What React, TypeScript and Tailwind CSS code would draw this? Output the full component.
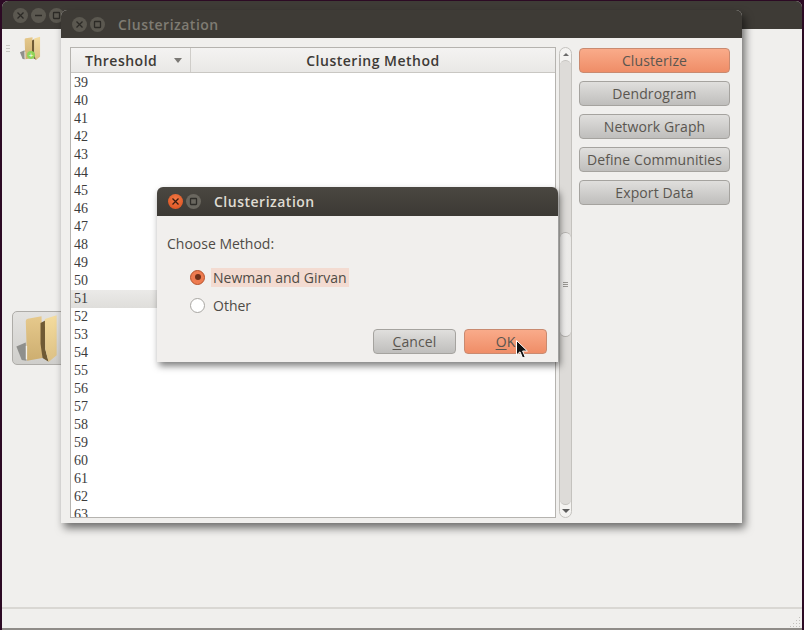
import React from 'react';

const uiFont = "font-['Open_Sans','Noto_Sans',sans-serif]";

const rows = Array.from({ length: 25 }, (_, i) => 39 + i);

const FolderIcon: React.FC<{ className?: string }> = ({ className }) => (
  <svg viewBox="40 95 140 155" className={className}>
    <defs>
      <linearGradient id="folderBody" x1="0" y1="0" x2="0" y2="1">
        <stop offset="0" stopColor="#e6c98c" />
        <stop offset="1" stopColor="#cdae70" />
      </linearGradient>
      <linearGradient id="folderFlap" x1="0" y1="0" x2="0" y2="1">
        <stop offset="0" stopColor="#f4dc9e" />
        <stop offset="1" stopColor="#dcc084" />
      </linearGradient>
    </defs>
    <path d="M50 198 L78 186 L80 240 L66 238 Z" fill="#8f8f8c" />
    <path d="M78 122 Q78 116 84 115 L125 108 L128 232 L82 240 Z" fill="url(#folderBody)" />
    <path d="M78 196 h4 v40 h-4 Z" fill="#f3efe6" />
    <path d="M122 128 L136 120 L136 205 L146 243 L128 232 L122 190 Z" fill="#6f5a34" />
    <path d="M135 116 L170 105 L170 224 L146 244 L136 205 Z" fill="url(#folderFlap)" />
  </svg>
);

const WinButton: React.FC<{ kind: 'close' | 'min' | 'max'; active?: boolean }> = ({ kind, active }) => {
  const isRed = active && kind === 'close';
  const face = isRed
    ? 'bg-[radial-gradient(circle_at_50%_35%,#f47a45,#d84d1c)]'
    : active
      ? 'bg-[#6a675f]'
      : 'bg-[#5b5850]';
  const ink = isRed ? '#3a1c10' : active ? '#2f2d29' : '#2c2a26';
  return (
    <span className={`flex h-[15px] w-[15px] items-center justify-center rounded-full ${face}`}>
      <svg viewBox="0 0 9 9" className="h-[9px] w-[9px]" fill="none" stroke={ink} strokeWidth="1.3">
        {kind === 'close' && <path d="M1.5 1.5 L7.5 7.5 M7.5 1.5 L1.5 7.5" />}
        {kind === 'min' && <path d="M1 4.5 H8" strokeWidth="1.6" />}
        {kind === 'max' && <rect x="1.5" y="1.5" width="6" height="6" rx="0.5" />}
      </svg>
    </span>
  );
};

const GtkButton: React.FC<{ orange?: boolean; className?: string; children: React.ReactNode }> = ({
  orange,
  className = '',
  children,
}) => (
  <div
    className={`flex h-[25px] items-center justify-center rounded-[4px] border text-[14px] tracking-[0.1px] text-[#5a5650] ${
      orange
        ? 'border-[#c98a70] bg-gradient-to-b from-[#f9ab8a] to-[#ef8d67]'
        : 'border-[#a5a39f] bg-gradient-to-b from-[#e0dfdd] to-[#bfbebc]'
    } ${className}`}
  >
    {children}
  </div>
);

const ScrollBar = () => (
  <div className="flex h-[471px] w-[13px] flex-col overflow-hidden rounded-[7px] border border-[#c4c2be] bg-[#f4f3f1]">
    <div className="flex h-[12px] items-center justify-center">
      <span className="h-0 w-0 border-x-[3px] border-b-[3px] border-x-transparent border-b-[#6a6a6a]" />
    </div>
    <div className="flex-1 rounded-[7px] border-y border-[#c4c2be] bg-[#dddbd8]">
      <div className="mt-[171px] flex h-[105px] flex-col items-center justify-center gap-[1px] rounded-[7px] border-y border-[#b5b3af] bg-gradient-to-r from-[#f6f5f4] to-[#e9e8e6]">
        <span className="h-px w-[5px] bg-[#9a9894]" />
        <span className="h-px w-[5px] bg-[#9a9894]" />
        <span className="h-px w-[5px] bg-[#9a9894]" />
      </div>
    </div>
    <div className="flex h-[12px] items-center justify-center">
      <span className="h-0 w-0 border-x-[4px] border-t-[4px] border-x-transparent border-t-[#5c5c5c]" />
    </div>
  </div>
);

const Cursor = () => (
  <svg viewBox="0 0 13 20" className="absolute left-[516px] top-[340px] h-[20px] w-[13px]">
    <path
      d="M0.5 0.5 L0.5 15 L4 11.8 L6.6 18 L9.2 16.9 L6.6 11 L11.4 11 Z"
      fill="#111"
      stroke="#fff"
      strokeWidth="1"
      strokeLinejoin="round"
    />
  </svg>
);

export default function App() {
  return (
    <div className={`relative h-[630px] w-[804px] overflow-hidden bg-[#2c0a24] ${uiFont}`}>
      {/* back window */}
      <div className="absolute left-[2px] top-[1px] flex h-[627px] w-[800px] flex-col overflow-hidden rounded-t-[6px] bg-[#f0efed]">
        <div className="flex h-[28px] items-center gap-[3px] bg-[#3e3b36] pl-[11px]">
          <WinButton kind="close" />
          <WinButton kind="min" />
          <WinButton kind="max" />
        </div>
        <div className="flex h-[50px] items-start pl-[4px] pt-[6px]">
          <div className="mt-[10px] flex w-[4px] flex-col gap-[2px]">
            <span className="h-px bg-[#c9c7c3]" />
            <span className="h-px bg-[#c9c7c3]" />
            <span className="h-px bg-[#c9c7c3]" />
          </div>
          <div className="relative ml-[8px]">
            <FolderIcon className="h-[26px] w-[24px]" />
            <span className="absolute bottom-[2px] left-[9px] flex h-[8px] w-[8px] items-center justify-center rounded-full bg-[#8fd45a] text-[8px] leading-none text-white">
              +
            </span>
          </div>
        </div>
        <div className="flex flex-1 items-start pl-[10px] pt-[232px]">
          <div className="flex h-[54px] w-[60px] items-center justify-start rounded-[5px] border border-[#aeaca8] bg-gradient-to-b from-[#e4e3e1] to-[#cfcecb]">
            <FolderIcon className="h-[52px] w-[47px]" />
          </div>
        </div>
        <div className="flex h-[21px] shrink-0 items-end justify-end border-t-2 border-[#d9d7d3]">
          <svg viewBox="0 0 12 12" className="h-[12px] w-[12px]" fill="#c2c0bc">
            <rect x="9" y="1" width="1" height="1" />
            <rect x="6" y="4" width="1" height="1" />
            <rect x="9" y="4" width="1" height="1" />
            <rect x="3" y="7" width="1" height="1" />
            <rect x="6" y="7" width="1" height="1" />
            <rect x="9" y="7" width="1" height="1" />
            <rect x="0" y="10" width="1" height="1" />
            <rect x="3" y="10" width="1" height="1" />
            <rect x="6" y="10" width="1" height="1" />
            <rect x="9" y="10" width="1" height="1" />
          </svg>
        </div>
      </div>
      <div className="absolute bottom-0 left-[2px] h-[2px] w-[800px] bg-[#8f8c88]" />

      {/* clusterization window */}
      <div className="absolute left-[61px] top-[10px] flex h-[513px] w-[681px] flex-col rounded-t-[6px] bg-[#f0efed] shadow-[3px_5px_8px_rgba(0,0,0,0.55)]">
        <div className="flex h-[28px] items-center rounded-t-[6px] bg-[#3e3b36] pl-[11px]">
          <div className="flex gap-[3px]">
            <WinButton kind="close" />
            <WinButton kind="max" />
          </div>
          <span className="ml-[13px] text-[14px] font-semibold tracking-[0.5px] text-[#7f7c73]">Clusterization</span>
        </div>
        <div className="flex items-start pl-[9px] pt-[9px]">
          <div className="flex h-[471px] w-[486px] flex-col overflow-hidden border border-[#b5b3af] bg-white">
            <div className="flex h-[25px] shrink-0 border-b border-[#c9c7c3] bg-gradient-to-b from-[#f4f3f2] to-[#e9e8e6] text-[14px] font-semibold tracking-[0.5px] text-[#3d3a36]">
              <div className="flex w-[120px] items-center border-r border-[#cfcdc9] pl-[14px]">
                <span>Threshold</span>
                <span className="ml-auto mr-[8px] h-0 w-0 border-x-[4px] border-t-[5px] border-x-transparent border-t-[#7b7975]" />
              </div>
              <div className="flex flex-1 items-center justify-center">Clustering Method</div>
            </div>
            <div className="flex-1 overflow-hidden pt-px font-['Liberation_Serif',serif] text-[14px] leading-[17px] text-[#3c3c3c]">
              {rows.map((n) => (
                <div
                  key={n}
                  className={`h-[18px] pl-[3px] ${n === 51 ? 'bg-gradient-to-b from-[#ebeae8] to-[#dfdedb]' : ''}`}
                >
                  {n}
                </div>
              ))}
            </div>
          </div>
          <div className="ml-[3px]">
            <ScrollBar />
          </div>
          <div className="ml-[7px] mt-px flex w-[151px] flex-col gap-[8px]">
            <GtkButton orange>Clusterize</GtkButton>
            <GtkButton>Dendrogram</GtkButton>
            <GtkButton>Network Graph</GtkButton>
            <GtkButton>Define Communities</GtkButton>
            <GtkButton>Export Data</GtkButton>
          </div>
        </div>
      </div>

      {/* dialog */}
      <div className="absolute left-[157px] top-[187px] flex h-[175px] w-[401px] flex-col rounded-t-[6px] bg-[#f1efed] shadow-[2px_4px_7px_rgba(0,0,0,0.5)]">
        <div className="flex h-[29px] items-center rounded-t-[6px] bg-gradient-to-b from-[#4a4741] to-[#3c3934] pl-[11px]">
          <div className="flex gap-[3px]">
            <WinButton kind="close" active />
            <WinButton kind="max" active />
          </div>
          <span className="ml-[13px] text-[14px] font-semibold tracking-[0.5px] text-[#dfdbd2]">Clusterization</span>
        </div>
        <div className="flex flex-1 flex-col pl-[10px] pr-[11px] text-[14px] text-[#4f4b46]">
          <div className="mt-[18px] h-[20px] leading-[20px]">Choose Method:</div>
          <div className="ml-[23px] mt-[13px] flex h-[20px] items-center">
            <span className="flex h-[15px] w-[15px] items-center justify-center rounded-full border border-[#b5532c] bg-[#ee7b50]">
              <span className="h-[6px] w-[6px] rounded-full bg-[#6e3019]" />
            </span>
            <span className="ml-[6px] bg-[#f3dbd1] px-[2px] leading-[19px]">Newman and Girvan</span>
          </div>
          <div className="ml-[23px] mt-[8px] flex h-[20px] items-center">
            <span className="h-[15px] w-[15px] rounded-full border border-[#a8a6a2] bg-white" />
            <span className="ml-[8px]">Other</span>
          </div>
          <div className="mt-[14px] flex justify-end gap-[8px]">
            <GtkButton className="w-[83px]">
              <span className="underline underline-offset-2">C</span>ancel
            </GtkButton>
            <GtkButton orange className="w-[83px]">
              <span className="underline underline-offset-2">O</span>K
            </GtkButton>
          </div>
        </div>
      </div>

      <Cursor />
    </div>
  );
}
